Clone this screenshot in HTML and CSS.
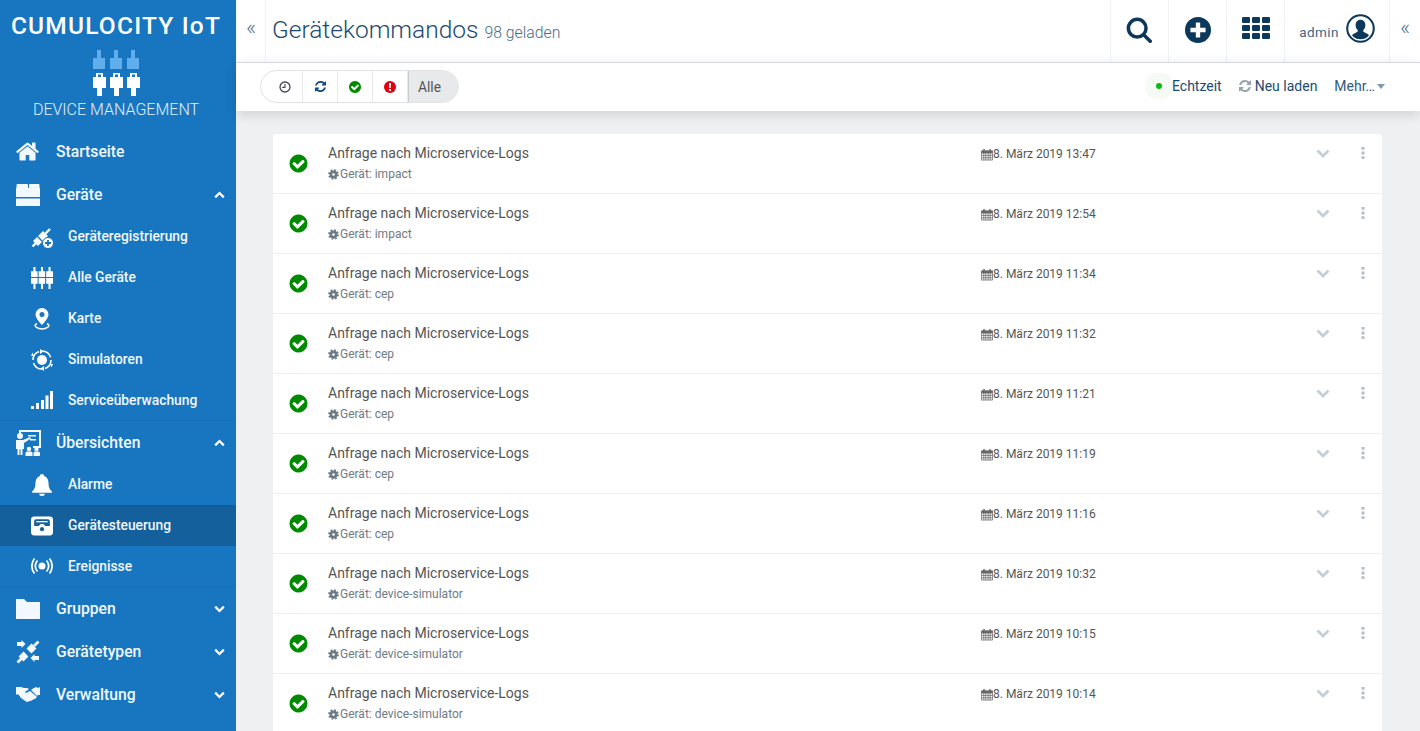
FILE: index.html
```html
<!DOCTYPE html>
<html lang="de">
<head>
  <meta charset="UTF-8">
  <title>Gerätekommandos</title>
  <link rel="stylesheet" href="styles.css">
</head>
<body>
  <!-- shared icons -->
  <svg class="icon-defs" aria-hidden="true">
    <symbol id="i-check" viewBox="0 0 1792 1792"><path d="M1412 734q0-28-18-46l-91-90q-19-19-45-19t-45 19l-408 407-226-226q-19-19-45-19t-45 19l-91 90q-18 18-18 46 0 27 18 45l362 362q19 19 45 19 27 0 46-19l543-543q18-18 18-45zm252 162q0 209-103 385.500t-279.500 279.500-385.500 103-385.500-103-279.500-279.500-103-385.500 103-385.500 279.500-279.500 385.500-103 385.500 103 279.500 279.500 103 385.500z"/></symbol>
    <symbol id="i-refresh" viewBox="0 0 1792 1792"><path d="M1639 1056q0 5-1 7-64 268-268 434.500t-478 166.500q-146 0-282.500-55t-243.500-157l-129 129q-19 19-45 19t-45-19-19-45v-448q0-26 19-45t45-19h448q26 0 45 19t19 45-19 45l-137 137q71 66 161 102t187 36q134 0 250-65t186-179q11-17 53-117 8-23 30-23h192q13 0 22.500 9.500t9.500 22.500zm25-800v448q0 26-19 45t-45 19h-448q-26 0-45-19t-19-45 19-45l138-138q-148-137-349-137-134 0-250 65t-186 179q-11 17-53 117-8 23-30 23h-199q-13 0-22.500-9.500t-9.500-22.500v-7q65-268 270-434.500t480-166.500q146 0 284 55.500t245 156.500l130-129q19-19 45-19t45 19 19 45z"/></symbol>
    <symbol id="i-home" viewBox="0 0 1792 1792"><path d="M1472 992v480q0 26-19 45t-45 19h-384v-384h-256v384h-384q-26 0-45-19t-19-45v-480q0-1 .5-3t.5-3l575-474 575 474q1 2 1 6zm223-69l-62 74q-8 9-21 11h-3q-13 0-21-7l-692-577-692 577q-12 8-24 7-13-2-21-11l-62-74q-8-10-7-23.500t11-21.500l719-599q32-26 76-26t76 26l244 204v-195q0-14 9-23t23-9h192q14 0 23 9t9 23v408l219 182q10 8 11 21.500t-7 23.500z"/></symbol>
    <symbol id="i-cog" viewBox="0 0 16 16"><circle cx="8" cy="8" r="3.800" fill="none" stroke="currentColor" stroke-width="3.800"/><circle cx="8" cy="8" r="6.500" fill="none" stroke="currentColor" stroke-width="2.600" stroke-dasharray="2.600 2.500"/></symbol>
    <symbol id="i-cal" viewBox="0 0 13 13"><path d="M.5 2.500h12v10H.5z M.5 5h12 M.5 7.500h12 M.5 10h12 M3 5v7.500 M5.200 5v7.500 M7.800 5v7.500 M10 5v7.500" fill="none" stroke="currentColor" stroke-width=".8"/><path d="M.5 2.500h12V5H.5zM2.500 .5h1.500v3H2.500z M9 .5h1.500v3H9z" fill="currentColor"/></symbol>
    <symbol id="i-down" viewBox="0 0 14 9"><path d="M1.500 1.500 7 7l5.500-5.500" fill="none" stroke="currentColor" stroke-width="2.800"/></symbol>
    <symbol id="i-up" viewBox="0 0 14 9"><path d="M1.500 7.500 7 2l5.500 5.500" fill="none" stroke="currentColor" stroke-width="2.800"/></symbol>
    <symbol id="i-dots" viewBox="0 0 4 12"><path d="M.5 0h3v2.800h-3zM.5 4.600h3v2.800h-3zM.5 9.200h3V12h-3z"/></symbol>
    <symbol id="i-plug-top" viewBox="0 0 12 19"><path d="M4 0h4v8h4v11H0V8h4z"/></symbol>
    <symbol id="i-plug-bottom" viewBox="0 0 13 23"><path fill-rule="evenodd" d="M3 0h7v4h3v11H9v8H4v-8H0V4h3zM5 1.500V4h3V1.500z"/></symbol>
  </svg>

  <aside class="sidebar">
    <div class="brand">
      <div class="brand-name">CUMULOCITY IoT</div>
      <div class="brand-logo">
        <div class="brand-plug">
          <svg class="plug-top"><use href="#i-plug-top"/></svg>
          <svg class="plug-bottom"><use href="#i-plug-bottom"/></svg>
        </div>
        <div class="brand-plug">
          <svg class="plug-top"><use href="#i-plug-top"/></svg>
          <svg class="plug-bottom"><use href="#i-plug-bottom"/></svg>
        </div>
        <div class="brand-plug">
          <svg class="plug-top"><use href="#i-plug-top"/></svg>
          <svg class="plug-bottom"><use href="#i-plug-bottom"/></svg>
        </div>
      </div>
      <div class="brand-app">DEVICE MANAGEMENT</div>
    </div>

    <nav class="nav">
      <a class="nav-main">
        <svg class="nav-icon nav-icon-home"><use href="#i-home"/></svg>
        <span>Startseite</span>
      </a>
      <a class="nav-main">
        <svg class="nav-icon" viewBox="0 0 24 22"><path d="M1.500 0h9.500q1 0 1 1v3H.5V1q0-1 1-1zM14 0h8.500q1 0 1 1v3H13V1q0-1 1-1zM0 4h24v9H0zM0 14.500h24V22H0z"/></svg>
        <span>Geräte</span>
        <svg class="nav-arrow"><use href="#i-up"/></svg>
      </a>
      <a class="nav-sub">
        <svg class="sub-icon" viewBox="0 0 22 22"><g fill="none" stroke="currentColor"><path d="M1.500 20.500 5 17M14 8l5-5" stroke-width="2.400"/><path d="M4.500 17.500l4-4M9.500 12.500l5-5" stroke-width="7"/></g><circle cx="17" cy="17" r="5.500" stroke="#1776bf"/><path d="M14 17h6M17 14v6" stroke="#1776bf" stroke-width="1.800"/></svg>
        <span>Geräteregistrierung</span>
      </a>
      <a class="nav-sub">
        <svg class="sub-icon" viewBox="0 0 21 21"><path d="M2.300 0h2v4h2v5.500H0V4h2.300zM0 10.500h6.300V16h-2v5h-2v-5H0zM9.500 0h2v4h2v5.500H7.300V4h2.200zM7.300 10.500h6.200V16h-2v5h-2v-5H7.300zM16.700 0h2v4H21v5.500h-6.500V4h2.200zM14.500 10.500H21V16h-2.300v5h-2v-5h-2.200z"/></svg>
        <span>Alle Geräte</span>
      </a>
      <a class="nav-sub">
        <svg class="sub-icon" viewBox="0 0 22 22"><path fill-rule="evenodd" d="M11 0a6.500 6.500 0 0 1 6.500 6.500C17.500 10 13 15 11 17 9 15 4.500 10 4.500 6.500A6.500 6.500 0 0 1 11 0zm0 4a2.500 2.500 0 1 0 0 5 2.500 2.500 0 0 0 0-5z"/><path d="M6 15.500c-5 2.500 1 5.500 5 5.500s10-3 5-5.500" fill="none" stroke="currentColor" stroke-width="1.500"/></svg>
        <span>Karte</span>
      </a>
      <a class="nav-sub">
        <svg class="sub-icon" viewBox="0 0 22 22"><circle cx="11" cy="11" r="5"/><circle cx="11" cy="11" r="9" fill="none" stroke="currentColor" stroke-width="1.600" stroke-dasharray="11 3.100"/><path d="M9 0l3.500 2.500L9 5zM13 22l-3.500-2.500L13 17zM19 15l3 0-1.500 3.500zM3 7H0l1.500-3.500z"/></svg>
        <span>Simulatoren</span>
      </a>
      <a class="nav-sub nav-last">
        <svg class="sub-icon" viewBox="0 0 22 18"><path d="M0 15h3v3H0zM5 12h3v6H5zM10 9h3v9h-3zM14.500 4.500h3V18h-3zM19 0h3v18h-3z"/></svg>
        <span>Serviceüberwachung</span>
      </a>
      <a class="nav-main">
        <svg class="nav-icon nav-icon-big" viewBox="0 0 26 26"><path fill-rule="evenodd" d="M4 0h22v18h-8v-2h6V2H6v1H4z"/><circle cx="5" cy="6" r="3"/><path d="M1 10h7l7-3 1 1.500L9 13v6H7.500v6H5.500v-5.500h-1V25h-2v-6H1z"/><path d="M13 5h8v1.500h-8zM15 9h6v1.500h-6z"/><circle cx="14" cy="19" r="2.200"/><circle cx="21.500" cy="19" r="2.200"/><path d="M10.500 26v-3q0-1.500 1.500-1.500h4q1.500 0 1.500 1.500v3zM18.500 26v-3q0-1.500 1-1.500h4q1.500 0 1.500 1.500v3z"/></svg>
        <span>Übersichten</span>
        <svg class="nav-arrow"><use href="#i-up"/></svg>
      </a>
      <a class="nav-sub">
        <svg class="sub-icon" viewBox="0 0 20 20"><path d="M10 0c1 0 2 .7 2 1.800C15 3 16 5.500 16 9c0 3 1 5 3 7v1H1v-1c2-2 3-4 3-7 0-3.500 1-6 4-7.200C8 .7 9 0 10 0z"/><path d="M7.500 18h5a2.500 2 0 0 1-5 0z"/></svg>
        <span>Alarme</span>
      </a>
      <a class="nav-sub nav-active">
        <svg class="sub-icon" viewBox="0 0 21 18"><rect width="21" height="18" rx="3"/><path d="M3 9V4.500Q3 2.500 5 2.500h11q2 0 2 2V9h-4.500L12 7H9L7.500 9z" fill="#14609d"/><path d="M5 4.300h11v1.200H5z"/><circle cx="10.500" cy="12" r="2" fill="#14609d"/></svg>
        <span>Gerätesteuerung</span>
      </a>
      <a class="nav-sub nav-last">
        <svg class="sub-icon" viewBox="0 0 22 16"><circle cx="11" cy="8" r="3.500"/><path d="M6.500 2.500a8 8 0 0 0 0 11M15.500 2.500a8 8 0 0 1 0 11M3.500 0.500a12 12 0 0 0 0 15M18.500 0.500a12 12 0 0 1 0 15" fill="none" stroke="currentColor" stroke-width="1.800"/></svg>
        <span>Ereignisse</span>
      </a>
      <a class="nav-main">
        <svg class="nav-icon" viewBox="0 0 24 20"><path d="M0 0h8l3 3h13v17H0z"/></svg>
        <span>Gruppen</span>
        <svg class="nav-arrow"><use href="#i-down"/></svg>
      </a>
      <a class="nav-main">
        <svg class="nav-icon" viewBox="0 0 24 24"><g fill="none" stroke="currentColor"><path d="M1.500 22.500 6 18M18 6l4.500-4.500" stroke-width="2.800"/><path d="M5 19l5-5M13 11l5-5" stroke-width="7"/></g><path d="M1 2h4.500V0L9.500 4 5.500 8V6H1zM23 16h-4.500v-2l-4 4 4 4v-2H23z"/></svg>
        <span>Gerätetypen</span>
        <svg class="nav-arrow"><use href="#i-down"/></svg>
      </a>
      <a class="nav-main">
        <svg class="nav-icon" viewBox="0 0 24 16"><path d="M0 0h5l3 1h3l2 1-4 3 1 1 4-2 6 5 1 1-2 2-1 0-1 1-1 0-1 1-2 0-1 1-2-.5-5-3.500-2.500-3.500H0zM24 0v8h-2l-1 1-6-6 2-1.500 3-1.500 2 1z"/></svg>
        <span>Verwaltung</span>
        <svg class="nav-arrow"><use href="#i-down"/></svg>
      </a>
    </nav>
  </aside>

  <main class="main">
    <header class="topbar">
      <button class="collapse collapse-left">«</button>
      <h1 class="title">Gerätekommandos <small>98 geladen</small></h1>
      <div class="top-actions">
        <div class="top-cell">
          <svg class="top-icon" viewBox="1 0 28 28"><circle cx="12" cy="12" r="9.500" fill="none" stroke="currentColor" stroke-width="3.800"/><path d="M19 19l7 7" stroke="currentColor" stroke-width="3.800" stroke-linecap="round"/></svg>
        </div>
        <div class="top-cell">
          <svg class="top-icon" viewBox="0 0 24 24"><path fill-rule="evenodd" d="M12 0a12 12 0 1 1 0 24 12 12 0 0 1 0-24zm-2 5v5H5v4h5v5h4v-5h5v-4h-5V5z"/></svg>
        </div>
        <div class="top-cell">
          <svg class="top-grid" viewBox="0 0 28 22"><rect width="8" height="6" rx="1.200"/><rect x="10" width="8" height="6" rx="1.200"/><rect x="20" width="8" height="6" rx="1.200"/><rect y="8" width="8" height="6" rx="1.200"/><rect x="10" y="8" width="8" height="6" rx="1.200"/><rect x="20" y="8" width="8" height="6" rx="1.200"/><rect y="16" width="8" height="6" rx="1.200"/><rect x="10" y="16" width="8" height="6" rx="1.200"/><rect x="20" y="16" width="8" height="6" rx="1.200"/></svg>
        </div>
        <div class="top-cell top-user">
          <span>admin</span>
          <svg class="user-icon" viewBox="0 0 28 28"><circle cx="14" cy="14" r="12.800" fill="none" stroke="currentColor" stroke-width="2"/><path d="M14 5.500c3 0 4.700 2.300 4.700 5.300 0 2.200-1 4-2.200 5 0 1.500 1 2 3 2.800 1.500.6 2.500 1.200 2.500 2.400a11 11 0 0 1-16 0c0-1.200 1-1.800 2.500-2.400 2-.8 3-1.300 3-2.800-1.200-1-2.200-2.800-2.200-5 0-3 1.700-5.300 4.700-5.300z"/></svg>
        </div>
        <button class="collapse collapse-right">«</button>
      </div>
    </header>

    <div class="toolbar">
      <div class="filters">
        <span class="filter filter-first">
          <svg class="filter-icon" viewBox="0 0 12 12"><circle cx="6" cy="6" r="5" fill="none" stroke="#444a50" stroke-width="1.300"/><path d="M6 3v3.400H3.300" fill="none" stroke="#444a50" stroke-width="1.100"/></svg>
        </span>
        <span class="filter"><svg class="filter-icon icon-blue"><use href="#i-refresh"/></svg></span>
        <span class="filter"><svg class="filter-icon icon-green"><use href="#i-check"/></svg></span>
        <span class="filter">
          <svg class="filter-icon" viewBox="0 0 12 12"><circle cx="6" cy="6" r="6" fill="#e0000e"/><path d="M5 2h2l-.2 5H5.200zM5 8h2v2H5z" fill="#fff"/></svg>
        </span>
        <span class="filter filter-all">Alle</span>
      </div>
      <div class="tools">
        <span class="tool tool-live"><i class="live-dot"></i>Echtzeit</span>
        <span class="tool"><svg class="reload-icon"><use href="#i-refresh"/></svg>Neu laden</span>
        <span class="tool tool-more">Mehr… <i class="caret"></i></span>
      </div>
    </div>

    <section class="list">
      <div class="row">
        <svg class="row-status"><use href="#i-check"/></svg>
        <div class="row-text"><div class="row-title">Anfrage nach Microservice-Logs</div><div class="row-device"><svg class="row-cog"><use href="#i-cog"/></svg>Gerät: impact</div></div>
        <div class="row-date"><svg class="row-cal"><use href="#i-cal"/></svg>8. März 2019 13:47</div>
        <svg class="row-chevron"><use href="#i-down"/></svg>
        <svg class="row-dots"><use href="#i-dots"/></svg>
      </div>
      <div class="row">
        <svg class="row-status"><use href="#i-check"/></svg>
        <div class="row-text"><div class="row-title">Anfrage nach Microservice-Logs</div><div class="row-device"><svg class="row-cog"><use href="#i-cog"/></svg>Gerät: impact</div></div>
        <div class="row-date"><svg class="row-cal"><use href="#i-cal"/></svg>8. März 2019 12:54</div>
        <svg class="row-chevron"><use href="#i-down"/></svg>
        <svg class="row-dots"><use href="#i-dots"/></svg>
      </div>
      <div class="row">
        <svg class="row-status"><use href="#i-check"/></svg>
        <div class="row-text"><div class="row-title">Anfrage nach Microservice-Logs</div><div class="row-device"><svg class="row-cog"><use href="#i-cog"/></svg>Gerät: cep</div></div>
        <div class="row-date"><svg class="row-cal"><use href="#i-cal"/></svg>8. März 2019 11:34</div>
        <svg class="row-chevron"><use href="#i-down"/></svg>
        <svg class="row-dots"><use href="#i-dots"/></svg>
      </div>
      <div class="row">
        <svg class="row-status"><use href="#i-check"/></svg>
        <div class="row-text"><div class="row-title">Anfrage nach Microservice-Logs</div><div class="row-device"><svg class="row-cog"><use href="#i-cog"/></svg>Gerät: cep</div></div>
        <div class="row-date"><svg class="row-cal"><use href="#i-cal"/></svg>8. März 2019 11:32</div>
        <svg class="row-chevron"><use href="#i-down"/></svg>
        <svg class="row-dots"><use href="#i-dots"/></svg>
      </div>
      <div class="row">
        <svg class="row-status"><use href="#i-check"/></svg>
        <div class="row-text"><div class="row-title">Anfrage nach Microservice-Logs</div><div class="row-device"><svg class="row-cog"><use href="#i-cog"/></svg>Gerät: cep</div></div>
        <div class="row-date"><svg class="row-cal"><use href="#i-cal"/></svg>8. März 2019 11:21</div>
        <svg class="row-chevron"><use href="#i-down"/></svg>
        <svg class="row-dots"><use href="#i-dots"/></svg>
      </div>
      <div class="row">
        <svg class="row-status"><use href="#i-check"/></svg>
        <div class="row-text"><div class="row-title">Anfrage nach Microservice-Logs</div><div class="row-device"><svg class="row-cog"><use href="#i-cog"/></svg>Gerät: cep</div></div>
        <div class="row-date"><svg class="row-cal"><use href="#i-cal"/></svg>8. März 2019 11:19</div>
        <svg class="row-chevron"><use href="#i-down"/></svg>
        <svg class="row-dots"><use href="#i-dots"/></svg>
      </div>
      <div class="row">
        <svg class="row-status"><use href="#i-check"/></svg>
        <div class="row-text"><div class="row-title">Anfrage nach Microservice-Logs</div><div class="row-device"><svg class="row-cog"><use href="#i-cog"/></svg>Gerät: cep</div></div>
        <div class="row-date"><svg class="row-cal"><use href="#i-cal"/></svg>8. März 2019 11:16</div>
        <svg class="row-chevron"><use href="#i-down"/></svg>
        <svg class="row-dots"><use href="#i-dots"/></svg>
      </div>
      <div class="row">
        <svg class="row-status"><use href="#i-check"/></svg>
        <div class="row-text"><div class="row-title">Anfrage nach Microservice-Logs</div><div class="row-device"><svg class="row-cog"><use href="#i-cog"/></svg>Gerät: device-simulator</div></div>
        <div class="row-date"><svg class="row-cal"><use href="#i-cal"/></svg>8. März 2019 10:32</div>
        <svg class="row-chevron"><use href="#i-down"/></svg>
        <svg class="row-dots"><use href="#i-dots"/></svg>
      </div>
      <div class="row">
        <svg class="row-status"><use href="#i-check"/></svg>
        <div class="row-text"><div class="row-title">Anfrage nach Microservice-Logs</div><div class="row-device"><svg class="row-cog"><use href="#i-cog"/></svg>Gerät: device-simulator</div></div>
        <div class="row-date"><svg class="row-cal"><use href="#i-cal"/></svg>8. März 2019 10:15</div>
        <svg class="row-chevron"><use href="#i-down"/></svg>
        <svg class="row-dots"><use href="#i-dots"/></svg>
      </div>
      <div class="row">
        <svg class="row-status"><use href="#i-check"/></svg>
        <div class="row-text"><div class="row-title">Anfrage nach Microservice-Logs</div><div class="row-device"><svg class="row-cog"><use href="#i-cog"/></svg>Gerät: device-simulator</div></div>
        <div class="row-date"><svg class="row-cal"><use href="#i-cal"/></svg>8. März 2019 10:14</div>
        <svg class="row-chevron"><use href="#i-down"/></svg>
        <svg class="row-dots"><use href="#i-dots"/></svg>
      </div>
    </section>
  </main>
</body>
</html>
```
FILE: styles.css
```css
html, body { margin: 0; padding: 0; height: 100%; overflow: hidden; }
body {
  display: flex;
  font-family: Roboto, "Liberation Sans", sans-serif;
  background: #eef0f2;
  color: #444;
}
.icon-defs { position: absolute; width: 0; height: 0; }

/* Sidebar */
.sidebar { width: 236px; flex: none; background: #1776bf; color: #fff; height: 731px; overflow: hidden; }
.brand { height: 130px; padding-right: 4px; box-sizing: border-box; display: flex; flex-direction: column; align-items: center; }
.brand-name { margin-top: 12px; font-size: 24.500px; line-height: 28px; font-weight: 500; letter-spacing: 1.200px; white-space: nowrap; }
.brand-logo { display: flex; gap: 4px; margin-top: 10px; }
.brand-plug { display: flex; flex-direction: column; align-items: center; width: 13px; }
.plug-top { width: 12px; height: 19px; fill: #5fadec; }
.plug-bottom { width: 13px; height: 23px; fill: #fff; margin-top: 4px; }
.brand-app { margin-top: 4px; font-size: 16px; line-height: 20px; font-weight: 300; color: #e3f0fb; white-space: nowrap; }

.nav-main, .nav-sub { display: flex; align-items: center; box-sizing: border-box; }
.nav-main { height: 43px; font-size: 15.700px; font-weight: 500; padding-left: 16px; color: #f2f8fd; }
.nav-main span { margin-left: 16px; }
.nav-icon { width: 24px; height: 24px; fill: currentColor; flex: none; }
.nav-icon-home { width: 25px; height: 25px; margin-left: -1px; }
.nav-icon-big { width: 26px; height: 26px; margin: 0 -1px 0 -1px; }
.nav-arrow { width: 11px; height: 8px; fill: none; color: #fff; margin-left: auto; margin-right: 11px; }
.nav-sub { height: 41px; font-size: 13.800px; font-weight: 500; padding-left: 31px; color: #f2f8fd; }
.nav-sub span { margin: 0 0 2px 15px; }
.sub-icon { width: 22px; height: 22px; fill: currentColor; color: #fff; flex: none; }
.nav-last { border-bottom: 1px solid #1770b5; }
.nav-last span { margin-bottom: 0; }
.nav-active { background: #14609d; border-top: 1px solid #125a92; }

/* Header */
.main { flex: 1; min-width: 0; }
.topbar { height: 62px; background: #fff; display: flex; align-items: stretch; border-bottom: 1px solid #dcdfe3; color: #0b385b; }
.collapse { background: none; border: 0; padding: 0 0 7px; width: 30px; font-family: inherit; font-size: 22px; color: #4f7698; font-weight: 300; }
.collapse-left { border-right: 1px solid #f0f1f3; border-left: 1px solid #f3f4f5; }
.collapse-right { border-left: 1px solid #f0f1f3; width: 31px; }
.title { margin: 0; padding-left: 6px; font-size: 24.500px; font-weight: 300; line-height: 60px; color: #1c4a72; white-space: nowrap; }
.title small { font-size: 15.800px; color: #466b8c; }
.top-actions { margin-left: auto; display: flex; }
.top-cell { width: 57px; border-left: 1px solid #f0f1f3; display: flex; align-items: center; justify-content: center; }
.top-icon { width: 28px; height: 26px; fill: currentColor; margin-bottom: 2px; }
.top-grid { width: 28px; height: 22px; fill: currentColor; margin-bottom: 6px; }
.top-user { width: 104px; font-size: 13.500px; letter-spacing: .4px; color: #406688; gap: 7px; }
.top-user span { margin-top: 2px; }
.user-icon { width: 29px; height: 29px; fill: #0b385b; color: #0b385b; margin-bottom: 6px; }

/* Toolbar */
.toolbar { position: relative; height: 48px; background: #fff; display: flex; align-items: center; justify-content: space-between; padding: 0 37px 0 24px; box-shadow: 0 3px 12px rgba(0, 0, 0, .14); }
.filters { display: flex; height: 33px; box-sizing: border-box; border: 1px solid #e0e2e5; border-radius: 17px; overflow: hidden; margin-top: -1px; }
.filter { width: 35px; box-sizing: border-box; display: flex; align-items: center; justify-content: center; border-right: 1px solid #e8e9eb; }
.filter-first { width: 42px; padding-left: 7px; }
.filter-icon { width: 12px; height: 12px; }
.icon-blue { fill: #12487a; width: 13px; height: 13px; }
.icon-green { fill: #008a00; width: 14px; height: 14px; }
.filter-all { width: 50px; font-size: 13.800px; color: #555; background: #e8e9eb; border-left: 1px solid #c8cacc; border-right: 0; justify-content: flex-start; padding-left: 9px; }
.tools { display: flex; align-items: center; gap: 16px; font-size: 14px; color: #1c4a72; margin-top: -2px; }
.tool { display: flex; align-items: center; white-space: nowrap; }
.tool-live { position: relative; padding-left: 3px; }
.live-dot { width: 6px; height: 6px; border-radius: 50%; background: #0dbb0d; margin-right: 10px; box-shadow: 0 0 0 10px #f5faf5; }
.reload-icon { width: 14px; height: 14px; fill: #94a3b0; margin-right: 3px; }
.tool-more { color: #2f5a80; margin-left: 1px; }
.caret { width: 0; height: 0; border: 4px solid transparent; border-top: 5px solid #7d99b3; border-bottom: 0; margin-left: 2px; margin-right: -2px; }

/* List */
.list { margin: 23px 38px 0 37px; background: #fff; border-radius: 3px 3px 0 0; }
.row { height: 59px; border-bottom: 1px solid #eceef0; display: flex; align-items: flex-start; }
.row-status { width: 21px; height: 21px; fill: #008a00; flex: none; margin: 19px 0 0 15px; }
.row-text { margin-left: 19px; width: 653px; flex: none; }
.row-title { font-size: 14px; line-height: 20px; margin-top: 9px; color: #555; }
.row-device { font-size: 12px; line-height: 16px; margin-top: 3px; color: #707a82; display: flex; align-items: center; }
.row-cog { width: 11px; height: 11px; color: #6d7a86; margin-right: 1px; }
.row-date { font-size: 12px; line-height: 20px; margin-top: 10px; color: #555; display: flex; align-items: center; width: 335px; flex: none; }
.row-cal { width: 12px; height: 13px; color: #666; flex: none; }
.row-chevron { width: 14px; height: 9px; color: #c3ced6; margin-top: 15px; flex: none; }
.row-dots { width: 4px; height: 12px; fill: #b4bec6; margin-top: 13px; margin-left: 31px; flex: none; }
```
